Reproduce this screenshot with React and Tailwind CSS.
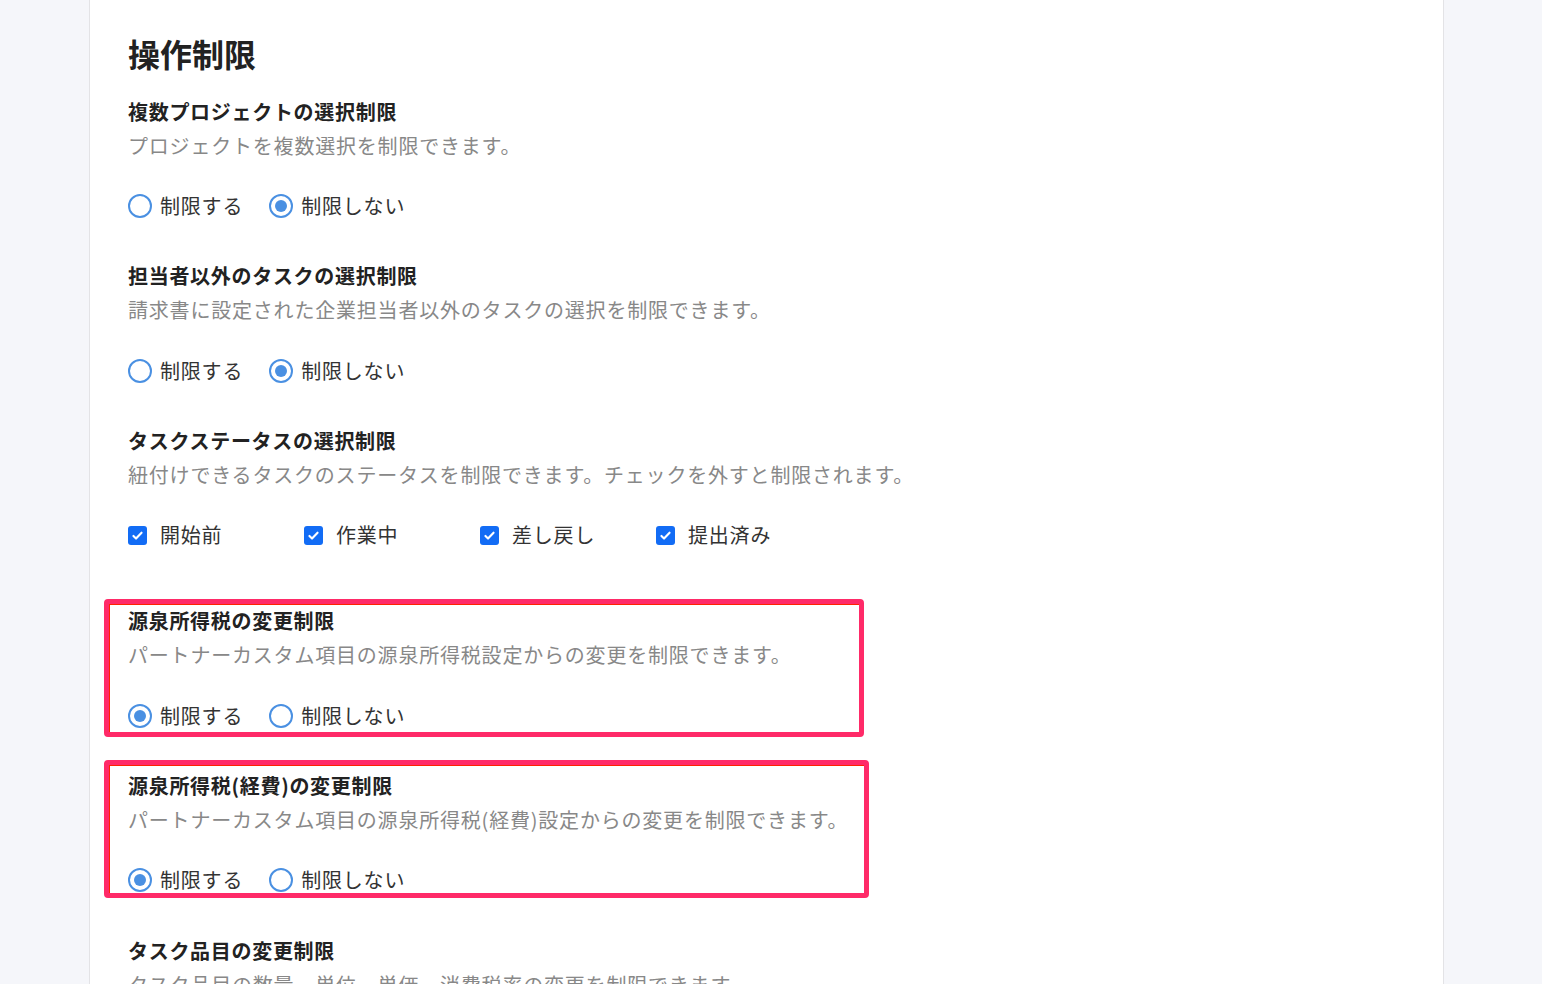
import React, { useState } from 'react';

const font = { fontFamily: '"Noto Sans CJK JP", "Noto Sans", sans-serif' };

const Radio = ({ checked, label, onClick }) => (
  <label className="flex items-center cursor-pointer" onClick={onClick}>
    <span className="w-[24px] h-[24px] rounded-full border-2 border-[#4a90e2] bg-white flex items-center justify-center shrink-0">
      {checked && <span className="w-[12px] h-[12px] rounded-full bg-[#4a90e2]" />}
    </span>
    <span className="ml-[8px] text-[20px] tracking-[0.8px] text-[#333] leading-[34px]">{label}</span>
  </label>
);

const Check = ({ checked, label, onClick }) => (
  <label className="w-[176px] flex items-center cursor-pointer" onClick={onClick}>
    <span className="w-[19px] h-[19px] rounded-[3px] bg-[#126cf5] flex items-center justify-center shrink-0">
      {checked && (
        <svg viewBox="0 0 16 16" className="w-[13px] h-[13px]" fill="none" stroke="white" strokeWidth="2.6" strokeLinecap="round" strokeLinejoin="round">
          <path d="M3 8.5l3.2 3.2L13 4.5" />
        </svg>
      )}
    </span>
    <span className="ml-[13px] text-[20px] tracking-[0.8px] text-[#333] leading-[34px]">{label}</span>
  </label>
);

// 注釈用の赤枠
const Highlight = ({ top, width }) => (
  <div
    className={`absolute left-[-24px] h-[138px] border-[5px] border-[#ff2a68] rounded-[4px] shadow-[inset_1px_1px_0_#ff2200] pointer-events-none ${top} ${width}`}
  />
);

const RadioSection = ({ title, desc, value, onChange, className = '', rowGap = 'mt-[26px]', highlight }) => (
  <div className={`relative ${className}`}>
    {highlight}
    <h3 className="text-[20px] font-bold tracking-[0.7px] text-[#222] leading-[34px]">{title}</h3>
    <p className="text-[20px] tracking-[0.8px] text-[#888] leading-[34px]">{desc}</p>
    <div className={`${rowGap} flex items-center gap-[26px] h-[34px]`}>
      <Radio checked={value === 'on'} label="制限する" onClick={() => onChange('on')} />
      <Radio checked={value === 'off'} label="制限しない" onClick={() => onChange('off')} />
    </div>
  </div>
);

const App = () => {
  const [settings, setSettings] = useState({
    multiProject: 'off',
    otherTask: 'off',
    withholding: 'on',
    withholdingExpense: 'on',
    taskItem: 'off',
  });
  const [statuses, setStatuses] = useState({
    開始前: true,
    作業中: true,
    差し戻し: true,
    提出済み: true,
  });

  const set = (key) => (v) => setSettings({ ...settings, [key]: v });

  return (
    <div className="min-h-screen bg-[#f5f6fa] flex" style={font}>
      <div className="ml-[89px] w-[1355px] bg-white border-x border-[#e3e3e6] px-[38px] pt-[33px] pb-[60px]">
        <h2 className="text-[32px] font-bold text-[#222] leading-[40px]">操作制限</h2>

        <RadioSection
          className="mt-[22px]"
          title="複数プロジェクトの選択制限"
          desc="プロジェクトを複数選択を制限できます。"
          value={settings.multiProject}
          onChange={set('multiProject')}
        />

        <RadioSection
          className="mt-[36px]"
          rowGap="mt-[27px]"
          title="担当者以外のタスクの選択制限"
          desc="請求書に設定された企業担当者以外のタスクの選択を制限できます。"
          value={settings.otherTask}
          onChange={set('otherTask')}
        />

        <div className="mt-[36px]">
          <h3 className="text-[20px] font-bold tracking-[0.7px] text-[#222] leading-[34px]">タスクステータスの選択制限</h3>
          <p className="text-[20px] tracking-[0.8px] text-[#888] leading-[34px]">
            紐付けできるタスクのステータスを制限できます。チェックを外すと制限されます。
          </p>
          <div className="mt-[26px] flex items-center h-[34px]">
            {Object.keys(statuses).map((s) => (
              <Check
                key={s}
                label={s}
                checked={statuses[s]}
                onClick={() => setStatuses({ ...statuses, [s]: !statuses[s] })}
              />
            ))}
          </div>
        </div>

        <RadioSection
          className="mt-[52px]"
          rowGap="mt-[27px]"
          title="源泉所得税の変更制限"
          desc="パートナーカスタム項目の源泉所得税設定からの変更を制限できます。"
          value={settings.withholding}
          onChange={set('withholding')}
          highlight={<Highlight top="top-[-5px]" width="w-[760px]" />}
        />

        <RadioSection
          className="mt-[36px]"
          title="源泉所得税(経費)の変更制限"
          desc="パートナーカスタム項目の源泉所得税(経費)設定からの変更を制限できます。"
          value={settings.withholdingExpense}
          onChange={set('withholdingExpense')}
          highlight={<Highlight top="top-[-9px]" width="w-[765px]" />}
        />

        <RadioSection
          className="mt-[37px]"
          title="タスク品目の変更制限"
          desc="タスク品目の数量、単位、単価、消費税率の変更を制限できます。"
          value={settings.taskItem}
          onChange={set('taskItem')}
        />
      </div>
    </div>
  );
};

export default App;
